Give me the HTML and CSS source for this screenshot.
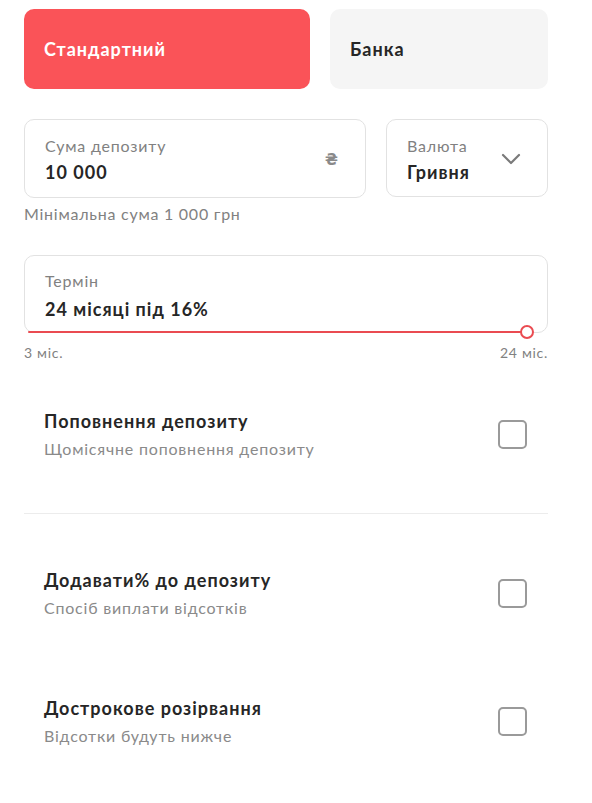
FILE: index.html
```html
<!DOCTYPE html>
<html lang="uk">
<head>
<meta charset="utf-8">
<title>Депозит</title>
<link rel="stylesheet" href="styles.css">
</head>
<body>
<div class="page">
  <div class="tabs">
    <div class="tab tab-active">Стандартний</div>
    <div class="tab tab-idle">Банка</div>
  </div>

  <div class="fields">
    <div class="field field-amount">
      <div class="field-text">
        <div class="field-label">Сума депозиту</div>
        <div class="field-value">10 000</div>
      </div>
      <span class="currency-sign">₴</span>
    </div>
    <div class="field field-currency">
      <div class="field-text">
        <div class="field-label">Валюта</div>
        <div class="field-value">Гривня</div>
      </div>
      <svg class="chevron" width="20" height="12" viewBox="0 0 20 12"><path d="M2 2 L10 10 L18 2" fill="none" stroke="#7a7a7a" stroke-width="2.2" stroke-linecap="round" stroke-linejoin="round"/></svg>
    </div>
  </div>
  <div class="hint">Мінімальна сума 1 000 грн</div>

  <div class="term">
    <div class="term-box">
      <div class="field-label">Термін</div>
      <div class="field-value">24 місяці під 16%</div>
      <div class="slider">
        <div class="slider-track"></div>
        <div class="slider-thumb"></div>
      </div>
    </div>
    <div class="slider-labels">
      <span>3 міс.</span>
      <span>24 міс.</span>
    </div>
  </div>

  <div class="option option-first">
    <div class="option-text">
      <div class="option-title">Поповнення депозиту</div>
      <div class="option-sub">Щомісячне поповнення депозиту</div>
    </div>
    <span class="checkbox"></span>
  </div>
  <div class="divider"></div>
  <div class="option">
    <div class="option-text">
      <div class="option-title">Додавати% до депозиту</div>
      <div class="option-sub">Спосіб виплати відсотків</div>
    </div>
    <span class="checkbox"></span>
  </div>
  <div class="option">
    <div class="option-text">
      <div class="option-title">Дострокове розірвання</div>
      <div class="option-sub">Відсотки будуть нижче</div>
    </div>
    <span class="checkbox"></span>
  </div>
</div>
</body>
</html>
```

FILE: styles.css
```css
* { box-sizing: border-box; }
html, body { margin: 0; padding: 0; background: #ffffff; }
body {
  font-family: Lato, "Noto Sans", "DejaVu Sans", sans-serif;
  color: #262626;
}
.page {
  width: 524px;
  margin-left: 24px;
  padding-top: 9px;
}
.tabs {
  display: flex;
  gap: 20px;
}
.tab {
  height: 80px;
  border-radius: 10px;
  display: flex;
  align-items: center;
  padding-left: 20px;
  font-size: 18px;
  font-weight: 700;
  letter-spacing: 1px;
}
.tab-active {
  width: 286px;
  background: #fa5358;
  color: #ffffff;
}
.tab-idle {
  flex: 1;
  background: #f5f5f5;
  color: #262626;
}
.fields {
  display: flex;
  gap: 20px;
  margin-top: 30px;
}
.field {
  height: 79px;
  border: 1px solid #e2e2e2;
  border-radius: 10px;
  display: flex;
  align-items: flex-start;
  justify-content: space-between;
  padding: 16px 20px 0;
}
.field-amount { width: 342px; padding-right: 27px; }
.field-currency { flex: 1; height: 78px; padding-right: 26px; }
.field-text { display: flex; flex-direction: column; }
.field-label {
  font-size: 16px;
  line-height: 20px;
  color: #818181;
  letter-spacing: 0.8px;
}
.field-value {
  font-size: 18px;
  line-height: 22px;
  font-weight: 700;
  color: #262626;
  margin-top: 5px;
  letter-spacing: 1px;
}
.currency-sign {
  font-family: "DejaVu Sans", sans-serif;
  font-weight: 700;
  font-size: 15px;
  line-height: 20px;
  margin-top: 14px;
  color: #8a8a8a;
}
.chevron { display: block; margin-top: 17px; }
.hint {
  margin-top: 6px;
  font-size: 16px;
  line-height: 20px;
  color: #818181;
  letter-spacing: 0.75px;
}
.term { margin-top: 31px; }
.term-box {
  position: relative;
  height: 78px;
  border: 1px solid #e2e2e2;
  border-radius: 10px;
  padding: 15px 20px 0;
}
.term-box .field-value { margin-top: 7px; }
.slider {
  position: absolute;
  left: 3px;
  right: 20px;
  bottom: -1px;
  height: 2px;
}
.slider-track {
  height: 2px;
  background: #ea4b51;
  border-radius: 1px;
}
.slider-thumb {
  position: absolute;
  right: -7px;
  top: -6px;
  width: 14px;
  height: 14px;
  border-radius: 50%;
  border: 2px solid #ea4b51;
  background: #ffffff;
}
.slider-labels {
  display: flex;
  justify-content: space-between;
  margin-top: 11px;
  font-size: 14px;
  line-height: 18px;
  color: #818181;
  letter-spacing: 0.7px;
}
.option {
  display: flex;
  align-items: center;
  justify-content: space-between;
  padding: 0 21px 0 20px;
  height: 128px;
}
.option-first { margin-top: 8px; }
.divider {
  height: 1px;
  background: #ececec;
  margin: 15px 0 15px;
}
.option-text { display: flex; flex-direction: column; }
.option-title {
  font-size: 18px;
  line-height: 24px;
  font-weight: 700;
  color: #262626;
  letter-spacing: 1px;
}
.option-sub {
  font-size: 16px;
  line-height: 22px;
  color: #8a8a8a;
  margin-top: 5px;
  letter-spacing: 0.8px;
}
.checkbox {
  width: 29px;
  height: 29px;
  border: 2px solid #9a9a9a;
  border-radius: 5px;
}
```
